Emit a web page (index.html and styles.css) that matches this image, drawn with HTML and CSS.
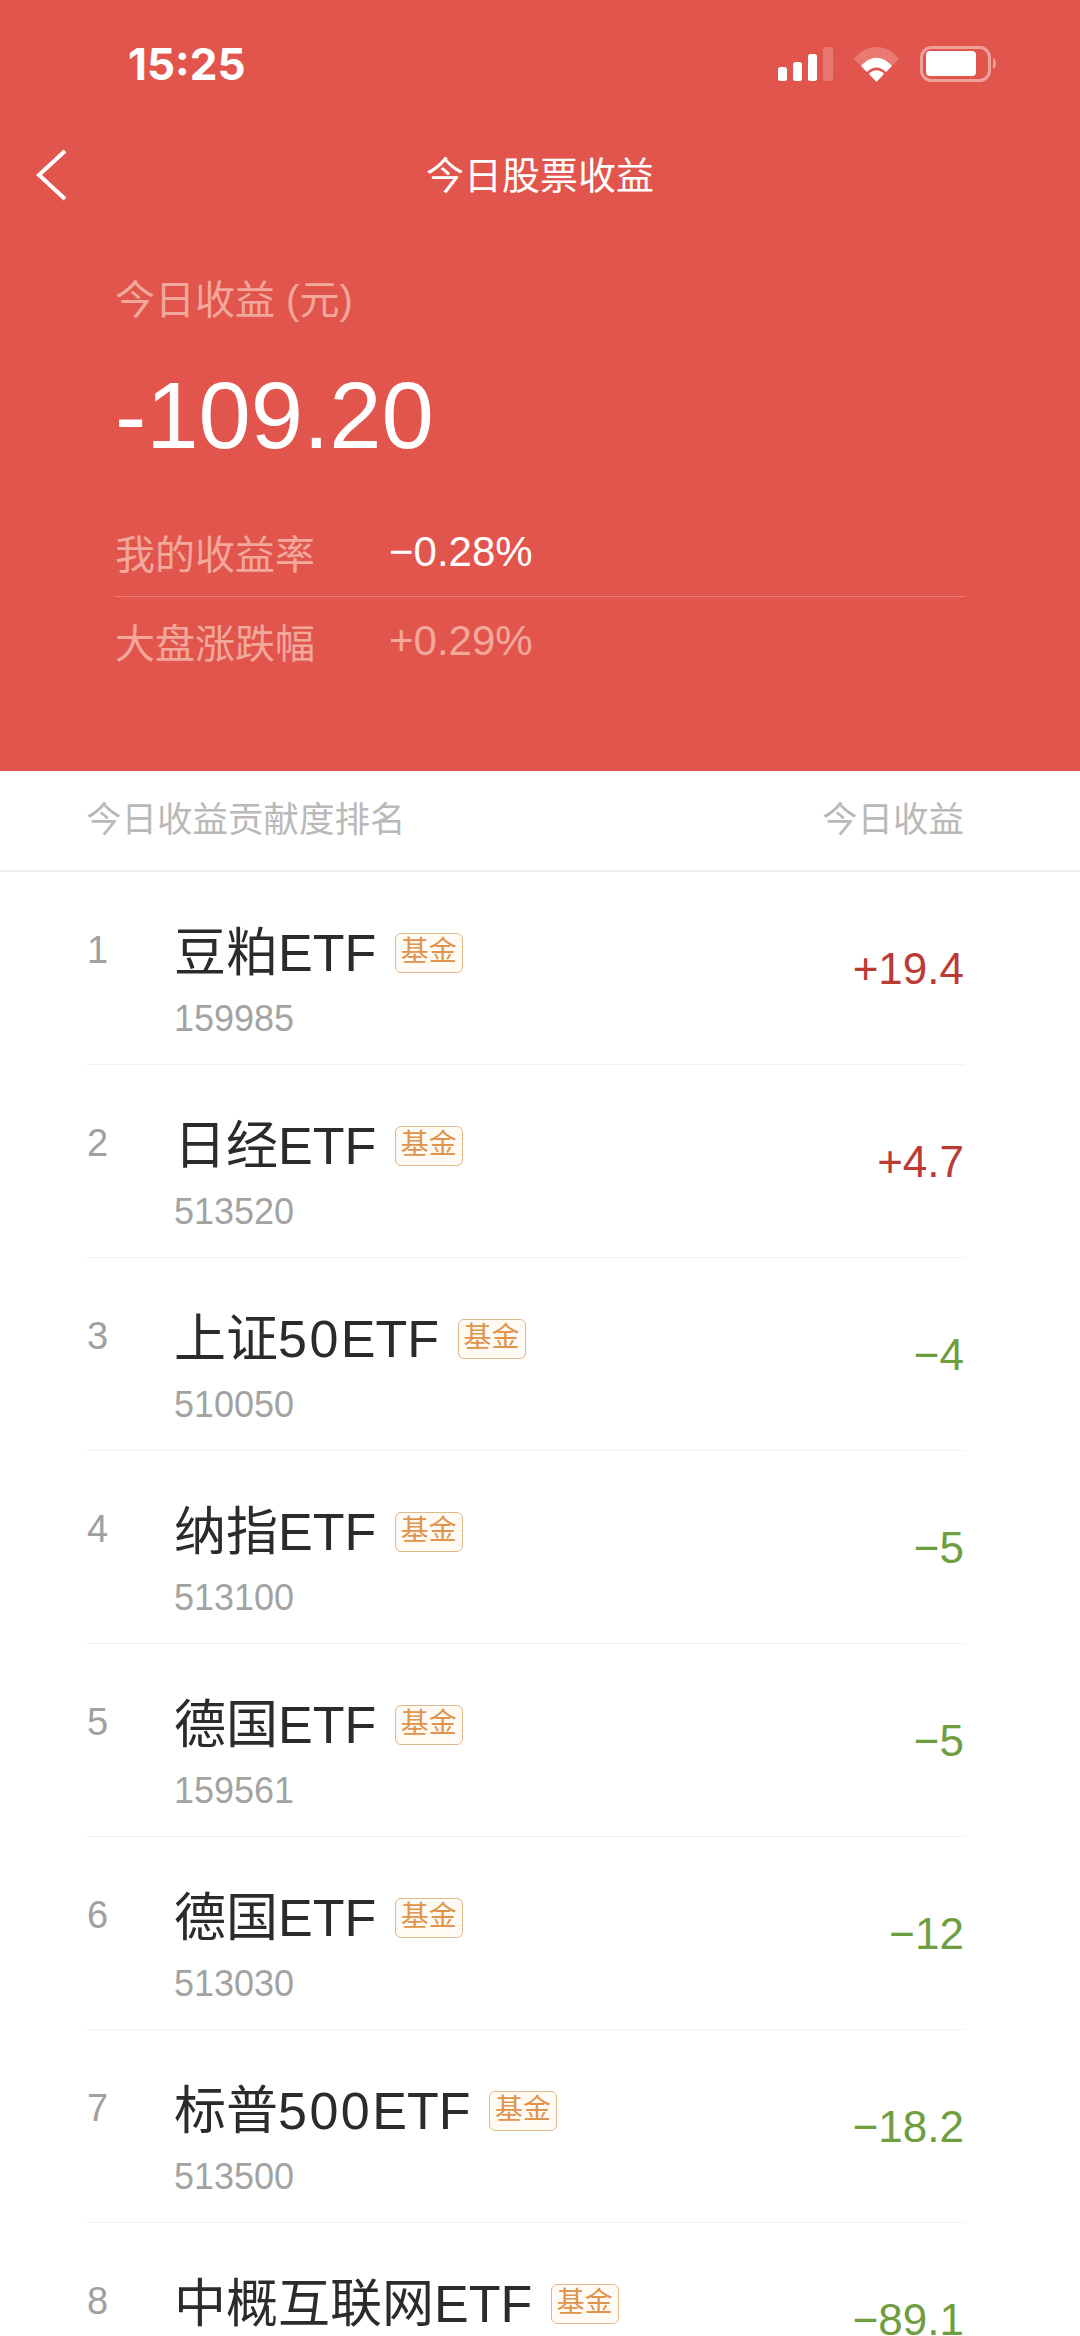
FILE: index.html
```html
<!DOCTYPE html>
<html lang="zh-CN">
<head>
    <meta charset="UTF-8">
    <title>今日股票收益</title>
    <link rel="stylesheet" href="styles.css">
</head>
<body>

<header class="hero">
    <div class="status-bar">
        <span class="clock">15:25</span>
        <div class="status-icons">
            <svg class="signal" width="55" height="34" viewBox="0 0 55 34">
                <rect x="0" y="20" width="9" height="14" rx="2.5" fill="#fff"/>
                <rect x="15" y="15" width="9" height="19" rx="2.5" fill="#fff"/>
                <rect x="30" y="7" width="9" height="27" rx="2.5" fill="#fff"/>
                <rect x="45" y="0" width="10" height="34" rx="2.5" fill="#fff" opacity="0.2"/>
            </svg>
            <svg class="wifi" width="45" height="35" viewBox="0 0 45 35">
                <path d="M0 12 C12 -4 33 -4 45 12 L38 19 C28 9 17 9 7 19 Z" fill="#fff" opacity="0.22"/>
                <path d="M7 19 C17 8 28 8 38 19 L32 25 C26 19 19 19 13 25 Z" fill="#fff"/>
                <path d="M15 27 C19 22 26 22 30 27 L22.5 35 Z" fill="#fff"/>
            </svg>
            <svg class="battery" width="77" height="36" viewBox="0 0 77 36">
                <rect x="1.5" y="1.5" width="68" height="33" rx="10" fill="none" stroke="#fff" stroke-opacity="0.45" stroke-width="3"/>
                <rect x="6" y="5" width="50" height="25" rx="4" fill="#fff"/>
                <path d="M73 12 C77 13 77 22 73 23 Z" fill="#fff" opacity="0.45"/>
            </svg>
        </div>
    </div>

    <div class="nav-bar">
        <svg class="back" width="32" height="52" viewBox="0 0 32 52">
            <path d="M30 2 L4 26 L30 50" fill="none" stroke="#fff" stroke-width="4"/>
        </svg>
        <h1 class="nav-title">今日股票收益</h1>
    </div>

    <div class="summary">
        <div class="summary-label">今日收益 (元)</div>
        <div class="summary-value">-109.20</div>
        <div class="rate-row">
            <span class="rate-label">我的收益率</span>
            <span class="rate-value">−0.28%</span>
        </div>
        <div class="rate-row rate-row-market">
            <span class="rate-label">大盘涨跌幅</span>
            <span class="rate-value">+0.29%</span>
        </div>
    </div>
</header>

<div class="list-head">
    <span>今日收益贡献度排名</span>
    <span>今日收益</span>
</div>

<main class="rank-list">
    <div class="rank-row">
        <span class="rank-no">1</span>
        <div class="rank-info">
            <div class="rank-name">豆粕ETF <span class="tag">基金</span></div>
            <div class="rank-code">159985</div>
        </div>
        <span class="rank-amount up">+19.4</span>
    </div>
    <div class="rank-row">
        <span class="rank-no">2</span>
        <div class="rank-info">
            <div class="rank-name">日经ETF <span class="tag">基金</span></div>
            <div class="rank-code">513520</div>
        </div>
        <span class="rank-amount up">+4.7</span>
    </div>
    <div class="rank-row">
        <span class="rank-no">3</span>
        <div class="rank-info">
            <div class="rank-name">上证<span class="digits">50</span>ETF <span class="tag">基金</span></div>
            <div class="rank-code">510050</div>
        </div>
        <span class="rank-amount down">−4</span>
    </div>
    <div class="rank-row">
        <span class="rank-no">4</span>
        <div class="rank-info">
            <div class="rank-name">纳指ETF <span class="tag">基金</span></div>
            <div class="rank-code">513100</div>
        </div>
        <span class="rank-amount down">−5</span>
    </div>
    <div class="rank-row">
        <span class="rank-no">5</span>
        <div class="rank-info">
            <div class="rank-name">德国ETF <span class="tag">基金</span></div>
            <div class="rank-code">159561</div>
        </div>
        <span class="rank-amount down">−5</span>
    </div>
    <div class="rank-row">
        <span class="rank-no">6</span>
        <div class="rank-info">
            <div class="rank-name">德国ETF <span class="tag">基金</span></div>
            <div class="rank-code">513030</div>
        </div>
        <span class="rank-amount down">−12</span>
    </div>
    <div class="rank-row">
        <span class="rank-no">7</span>
        <div class="rank-info">
            <div class="rank-name">标普<span class="digits">500</span>ETF <span class="tag">基金</span></div>
            <div class="rank-code">513500</div>
        </div>
        <span class="rank-amount down">−18.2</span>
    </div>
    <div class="rank-row">
        <span class="rank-no">8</span>
        <div class="rank-info">
            <div class="rank-name">中概互联网ETF <span class="tag">基金</span></div>
        </div>
        <span class="rank-amount down">−89.1</span>
    </div>
</main>

</body>
</html>
```
FILE: styles.css
```css
html, body {
    margin: 0;
    padding: 0;
    height: 2336px;
    overflow: hidden;
}
body {
    font-family: "Liberation Sans", "Noto Sans CJK SC", sans-serif;
    background-color: #fff;
}
.hero {
    background-color: #e2554c;
    height: 771px;
    color: #fff;
    box-sizing: border-box;
}
.status-bar {
    display: flex;
    justify-content: space-between;
    align-items: center;
    height: 40px;
    padding: 44px 83px 0 128px;
}
.clock {
    font-size: 44px;
    font-weight: bold;
    font-family: "Inter", "Liberation Sans", sans-serif;
}
.status-icons {
    display: flex;
    align-items: center;
    gap: 21px;
}
.nav-bar {
    position: relative;
    display: flex;
    justify-content: center;
    align-items: center;
    height: 60px;
    margin-top: 62px;
}
.back {
    position: absolute;
    left: 35px;
    top: 3px;
}
.nav-title {
    margin: 0;
    font-size: 38px;
    font-weight: normal;
    line-height: 60px;
}
.summary {
    padding: 0 115px;
    margin-top: 69px;
}
.summary-label {
    font-size: 40px;
    line-height: 50px;
    color: #f3a89c;
}
.summary-value {
    font-size: 94px;
    line-height: 110px;
    margin-top: 36px;
}
.rate-row {
    display: flex;
    align-items: center;
    height: 90px;
    margin-top: 36px;
    font-size: 40px;
    box-sizing: border-box;
    border-bottom: 1px solid #ee7d74;
}
.rate-row-market {
    height: 87px;
    margin-top: 0;
    border-bottom: none;
}
.rate-label {
    width: 274px;
    color: #f3a89c;
    flex-shrink: 0;
}
.rate-value {
    font-size: 42px;
    color: #fff;
}
.rate-row-market .rate-value {
    color: #f3a89c;
}
.list-head {
    display: flex;
    justify-content: space-between;
    align-items: center;
    height: 101px;
    padding: 0 116px 8px 86px;
    font-size: 35.5px;
    color: #b9b9b9;
    border-bottom: 2px solid #eeeeee;
    box-sizing: border-box;
}
.rank-list {
    padding: 0 116px 0 87px;
}
.rank-row {
    display: flex;
    height: 193px;
    box-sizing: border-box;
    border-bottom: 1px solid #f2f2f2;
}
.rank-no {
    width: 87px;
    flex-shrink: 0;
    font-size: 38px;
    line-height: 42px;
    color: #a0a0a0;
    margin-top: 57px;
}
.rank-info {
    flex: 1;
    padding-top: 50px;
}
.rank-name {
    display: flex;
    align-items: center;
    font-size: 52px;
    line-height: 62px;
    color: #2b2b2b;
    white-space: pre;
}
.digits {
    letter-spacing: 2.5px;
}
.tag {
    box-sizing: border-box;
    width: 68px;
    height: 40px;
    margin-left: 4px;
    border: 1.5px solid #dfb98c;
    border-radius: 6px;
    background-color: #fffaf3;
    color: #e0934a;
    font-size: 28px;
    line-height: 36px;
    text-align: center;
}
.rank-code {
    font-size: 36px;
    line-height: 40px;
    color: #a3a3a3;
    margin-top: 15px;
}
.rank-amount {
    font-size: 44px;
    line-height: 50px;
    margin-top: 72px;
}
.up {
    color: #bb3a34;
}
.down {
    color: #6e9e3f;
}
```
